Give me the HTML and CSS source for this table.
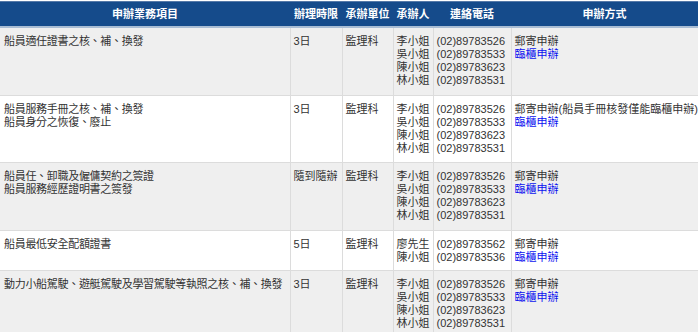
FILE: index.html
```html
<!DOCTYPE html>
<html lang="zh-Hant">
<head>
<meta charset="utf-8">
<link rel="stylesheet" href="styles.css">
</head>
<body>
<table class="svc">
  <colgroup>
    <col class="c-item"><col class="c-time"><col class="c-unit"><col class="c-person"><col class="c-phone"><col class="c-way">
  </colgroup>
  <thead>
    <tr>
      <th>申辦業務項目</th>
      <th>辦理時限</th>
      <th>承辦單位</th>
      <th>承辦人</th>
      <th>連絡電話</th>
      <th>申辦方式</th>
    </tr>
  </thead>
  <tbody>
    <tr class="alt r-tall">
      <td class="item">船員適任證書之核、補、換發</td>
      <td>3日</td>
      <td>監理科</td>
      <td>李小姐<br>吳小姐<br>陳小姐<br>林小姐</td>
      <td>(02)89783526<br>(02)89783533<br>(02)89783623<br>(02)89783531</td>
      <td>郵寄申辦<br><a href="#">臨櫃申辦</a></td>
    </tr>
    <tr class="r-mid">
      <td class="item">船員服務手冊之核、補、換發<br>船員身分之恢復、廢止</td>
      <td>3日</td>
      <td>監理科</td>
      <td>李小姐<br>吳小姐<br>陳小姐<br>林小姐</td>
      <td>(02)89783526<br>(02)89783533<br>(02)89783623<br>(02)89783531</td>
      <td>郵寄申辦(船員手冊核發僅能臨櫃申辦)<br><a href="#">臨櫃申辦</a></td>
    </tr>
    <tr class="alt r-tall">
      <td class="item">船員任、卸職及僱傭契約之簽證<br>船員服務經歷證明書之簽發</td>
      <td>隨到隨辦</td>
      <td>監理科</td>
      <td>李小姐<br>吳小姐<br>陳小姐<br>林小姐</td>
      <td>(02)89783526<br>(02)89783533<br>(02)89783623<br>(02)89783531</td>
      <td>郵寄申辦<br><a href="#">臨櫃申辦</a></td>
    </tr>
    <tr>
      <td class="item">船員最低安全配額證書</td>
      <td>5日</td>
      <td>監理科</td>
      <td>廖先生<br>陳小姐</td>
      <td>(02)89783562<br>(02)89783536</td>
      <td>郵寄申辦<br><a href="#">臨櫃申辦</a></td>
    </tr>
    <tr class="alt r-tall">
      <td class="item">動力小船駕駛、遊艇駕駛及學習駕駛等執照之核、補、換發</td>
      <td>3日</td>
      <td>監理科</td>
      <td>李小姐<br>吳小姐<br>陳小姐<br>林小姐</td>
      <td>(02)89783526<br>(02)89783533<br>(02)89783623<br>(02)89783531</td>
      <td>郵寄申辦<br><a href="#">臨櫃申辦</a></td>
    </tr>
  </tbody>
</table>
</body>
</html>
```
FILE: styles.css
```css
html, body {
  margin: 0;
  padding: 0;
  background: #fff;
}
body {
  padding-top: 1px;
  font-family: "Liberation Sans", Arial, "Noto Sans CJK TC", sans-serif;
  font-size: 11px;
  color: #333;
}
.svc {
  width: 698px;
  table-layout: fixed;
  border-collapse: collapse;
}
.c-item { width: 290px; }
.c-time { width: 52px; }
.c-unit { width: 51px; }
.c-person { width: 40px; }
.c-phone { width: 78px; }
.c-way { width: 187px; }

.svc th {
  background: #154b8b;
  color: #fff;
  font-weight: bold;
  height: 24px;
  padding: 0;
  line-height: 13px;
  border-top: 1px solid #5579a8;
  border-bottom: 2px solid #a9bdd4;
  text-align: center;
  vertical-align: middle;
}
.svc td {
  vertical-align: top;
  text-align: left;
  line-height: 13px;
  padding: 7px 3px 6px 3px;
  border-top: 1px solid #dcdcdc;
  border-left: 1px solid #dcdcdc;
  white-space: nowrap;
}
.svc td:first-child {
  border-left: none;
  padding-left: 4px;
}
.svc td.item { letter-spacing: -0.3px; }
.svc tr.alt td { background: #efefef; }
.svc tr.r-tall td { padding-bottom: 8px; }
.svc tr.r-mid td { padding-bottom: 7px; }
.svc a {
  color: #0b12f0;
  text-decoration: none;
}
```
